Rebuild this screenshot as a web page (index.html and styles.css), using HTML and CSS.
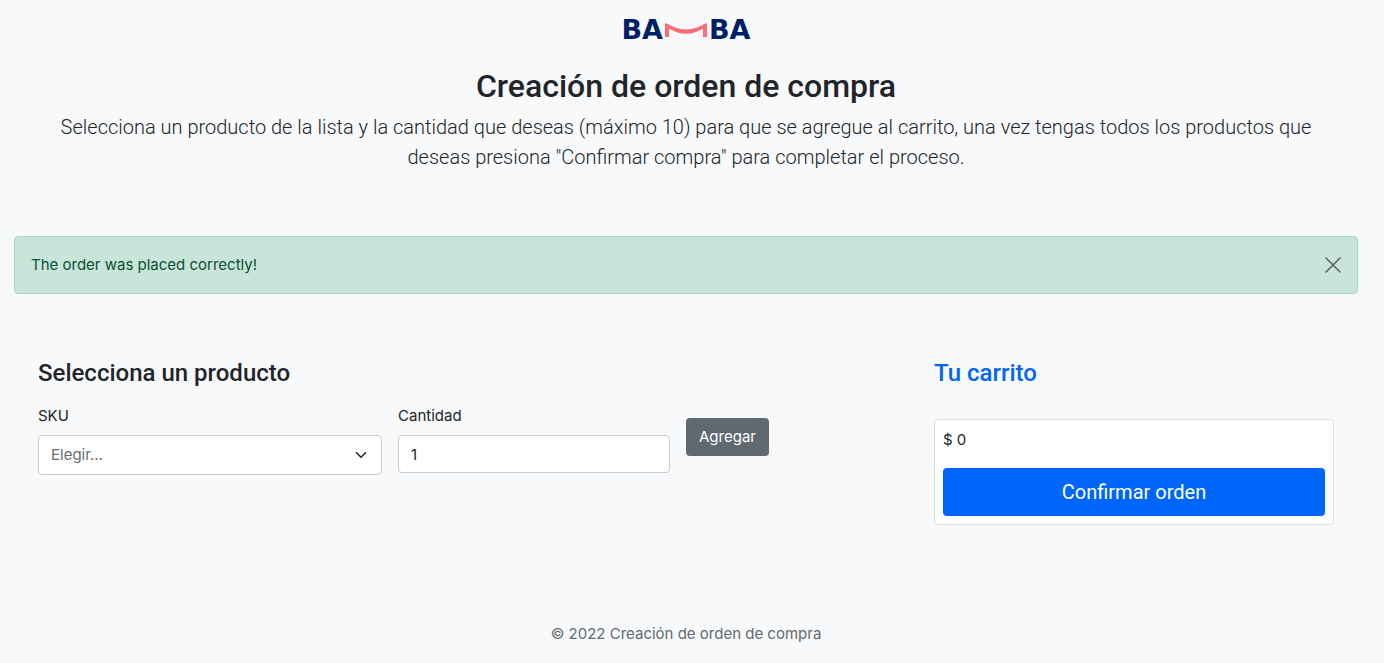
FILE: index.html
```html
<!DOCTYPE html>
<html lang="es">
<head>
<meta charset="utf-8">
<meta name="viewport" content="width=device-width, initial-scale=1">
<title>Creación de orden de compra</title>
<link rel="stylesheet" href="styles.css">
</head>
<body>
<header class="intro">
  <div class="logo">
    <span>BA</span>
    <svg class="logo-arc" width="42" height="14" viewBox="0 0 42 14" aria-hidden="true">
      <path d="M0 14V1.300Q0 0 1.300 .3C9 4.500 14 6.500 21 6.500S33 4.500 40.700 .3Q42 0 42 1.300V14H38V5.500C32 9 27 10.800 21 10.800S10 9 4 5.500V14Z" fill="#ff6b74"/>
    </svg>
    <span>BA</span>
  </div>
  <h1 class="title">Creación de orden de compra</h1>
  <p class="lead">Selecciona un producto de la lista y la cantidad que deseas (máximo 10) para que se agregue al carrito, una vez tengas todos los productos que deseas presiona "Confirmar compra" para completar el proceso.</p>
</header>
<div class="alert" role="alert">
  <span>The order was placed correctly!</span>
  <button class="close" type="button" aria-label="Cerrar">
    <svg width="16" height="16" viewBox="0 0 16 16" fill="none" stroke="currentColor" stroke-width="1.500" stroke-linecap="round"><path d="M1 1L15 15M15 1L1 15"/></svg>
  </button>
</div>
<main class="columns">
  <section class="product">
    <h2 class="heading">Selecciona un producto</h2>
    <form class="form">
      <div class="field">
        <label for="sku">SKU</label>
        <div class="select-wrap">
          <select id="sku" class="control select"><option>Elegir...</option></select>
          <svg class="chevron" width="12" height="12" viewBox="0 0 16 16" fill="none" stroke="#212529" stroke-width="2" stroke-linecap="round" stroke-linejoin="round" aria-hidden="true"><path d="M2 5l6 6 6-6"/></svg>
        </div>
      </div>
      <div class="field">
        <label for="qty">Cantidad</label>
        <input id="qty" class="control" type="text" inputmode="numeric" value="1">
      </div>
      <div class="action"><button class="btn" type="button">Agregar</button></div>
    </form>
  </section>
  <section class="cart">
    <h2 class="heading heading-cart">Tu carrito</h2>
    <div class="card">
      <span>$ 0</span>
      <button class="btn btn-primary" type="button">Confirmar orden</button>
    </div>
  </section>
</main>
<footer class="footer">© 2022 Creación de orden de compra</footer>
</body>
</html>
```
FILE: styles.css
```css
* { box-sizing: border-box; }
body {
  margin: 0;
  padding: 17px 26px 16px 14px;
  background: #f8f9fa;
  color: #212529;
  font: 400 15px/24px Inter, "Liberation Sans", sans-serif;
}
h1, h2, p { margin: 0; }
button, input, select { font: inherit; }
.intro { padding: 0 44px; text-align: center; }
.logo {
  display: flex;
  justify-content: center;
  align-items: center;
  gap: 2px;
  height: 26px;
  color: #001f66;
  font-family: "DejaVu Sans", sans-serif;
  font-size: 27px;
  font-weight: 700;
}
.logo-arc { display: block; }
.title, .lead, .heading, .btn-primary { font-family: Roboto, "Liberation Sans", sans-serif; }
.title { margin: 24px 0 7px; font-size: 32px; line-height: 38px; font-weight: 500; }
.lead { font-size: 20px; line-height: 30px; font-weight: 300; }
.alert {
  display: flex;
  justify-content: space-between;
  align-items: center;
  margin-top: 64px;
  padding: 16px;
  border: 1px solid #a9d8c3;
  border-radius: 4px;
  background: #c9e4d9;
  color: #0a5033;
}
.close {
  display: flex;
  padding: 0;
  border: 0;
  background: none;
  color: #57645f;
}
.columns {
  display: grid;
  grid-template-columns: 2fr 1fr;
  margin-top: 65px;
}
.product, .cart { padding: 0 24px; }
.heading { font-size: 24px; line-height: 29px; font-weight: 500; }
.heading-cart { color: #0066fa; }
.form {
  display: grid;
  grid-template-columns: 5fr 4fr 3fr;
  margin: 16px -8px 0;
}
.field, .action { padding: 0 8px; }
.field label { display: block; margin-bottom: 7px; }
.control {
  display: block;
  width: 100%;
  height: 38px;
  padding: 0 12px;
  border: 1px solid #c6cdd5;
  border-radius: 4px;
  background: #fff;
  color: #212529;
}
.select-wrap { display: grid; align-items: center; }
.select-wrap > * { grid-area: 1 / 1; }
.select { height: 40px; appearance: none; color: #6b6d70; }
.chevron { justify-self: end; margin-right: 15px; pointer-events: none; }
.action { padding-top: 14px; }
.btn {
  height: 38px;
  padding: 0 13px;
  border: 0;
  border-radius: 4px;
  background: #606970;
  color: #fff;
}
.card {
  display: flex;
  flex-direction: column;
  gap: 16px;
  margin-top: 31px;
  padding: 8px;
  border: 1px solid #dcdddf;
  border-radius: 4px;
  background: #fff;
}
.btn-primary { height: 48px; background: #0066fa; font-size: 20px; }
.footer { margin-top: 97px; text-align: center; color: #626b73; }
```
